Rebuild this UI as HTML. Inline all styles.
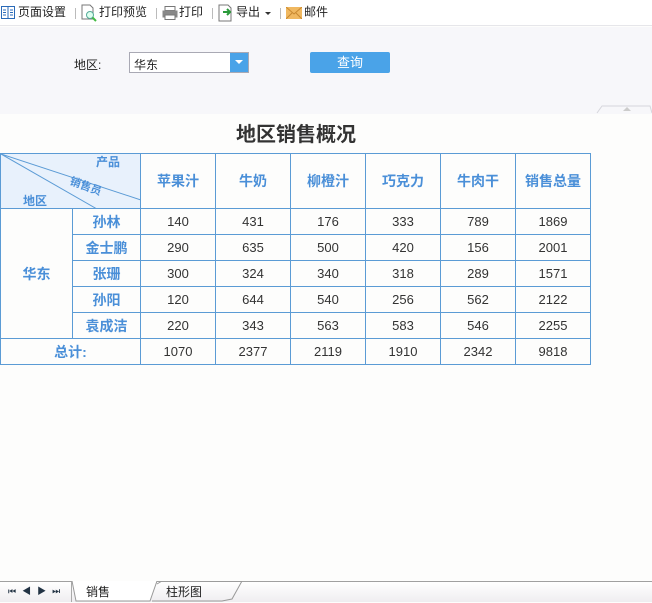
<!DOCTYPE html>
<html><head><meta charset="utf-8">
<style>
*{margin:0;padding:0;box-sizing:border-box}
body{width:652px;height:602px;background:#fdfdfc;position:relative;overflow:hidden;font-family:"Liberation Sans","Noto Sans CJK SC",sans-serif;font-size:12px;color:#222}
.tb{position:absolute;left:0;top:0;width:652px;height:26px;background:#fff;border-bottom:1px solid #e6e6ea}
.tb span{position:absolute;top:5px;font-size:12px;color:#222;line-height:14px}
.sep{position:absolute;top:8px;width:1px;height:11px;background:#bbb}
.param{position:absolute;left:0;top:27px;width:652px;height:87px;background:#f7f7fa}
.sel{position:absolute;left:129px;top:52px;width:120px;height:21px;border:1px solid #a9a9b4;background:#fff}
.btn{position:absolute;left:310px;top:52px;width:80px;height:21px;background:#4aa3e8;border-radius:2px;color:#fff;text-align:center;line-height:21px;font-size:13px}
table{position:absolute;left:0;top:153px;border-collapse:collapse}
td{border:1px solid #5b9bd5;text-align:center;font-size:13px;color:#333;height:26px;padding:0}
td.h{color:#4a8fd8;font-weight:bold;font-size:14px}
.title{position:absolute;left:0;width:592px;top:118px;text-align:center;font-size:20px;font-weight:bold;color:#333}
.bot{position:absolute;left:0;top:581px;width:652px;height:21px;border-top:1px solid #a0a0a0;background:linear-gradient(#fff,#efedf0)}
</style></head><body>
<div class="tb">
<svg style="position:absolute;left:1px;top:6px" width="14" height="13"><rect x="0.5" y="0.5" width="13" height="12" fill="#fff" stroke="#2a6ab8"/><line x1="7" y1="1" x2="7" y2="12" stroke="#2a6ab8"/><path d="M2 4h3M2 6.5h3M2 9h3M9 4h3M9 6.5h3M9 9h3" stroke="#2a6ab8"/></svg>
<span style="left:18px">页面设置</span>
<div class="sep" style="left:75px"></div>
<svg style="position:absolute;left:81px;top:4px" width="16" height="18"><path d="M1 1h8l3 3v11H1z" fill="#fff" stroke="#777"/><circle cx="9" cy="11" r="3.5" fill="#dfe" stroke="#5a9"/><line x1="11.5" y1="13.5" x2="15" y2="17" stroke="#4b4" stroke-width="2"/></svg>
<span style="left:99px">打印预览</span>
<div class="sep" style="left:156px"></div>
<svg style="position:absolute;left:162px;top:6px" width="16" height="14"><rect x="3" y="0.5" width="10" height="4" fill="#fff" stroke="#777"/><rect x="0.5" y="4.5" width="15" height="7" fill="#888"/><rect x="3" y="9" width="10" height="4.5" fill="#fff" stroke="#777"/></svg>
<span style="left:179px">打印</span>
<div class="sep" style="left:212px"></div>
<svg style="position:absolute;left:218px;top:4px" width="16" height="18"><path d="M1 1h9l3 3v13H1z" fill="#fff" stroke="#777"/><path d="M5 8h7M9 5l3 3-3 3" stroke="#2a9a3a" stroke-width="2" fill="none"/></svg>
<span style="left:236px">导出</span>
<svg style="position:absolute;left:265px;top:12px" width="6" height="4"><path d="M0 0h6L3 3z" fill="#333"/></svg>
<div class="sep" style="left:280px"></div>
<svg style="position:absolute;left:286px;top:7px" width="16" height="12"><rect width="16" height="12" fill="#f0b860"/><path d="M0 0l8 7 8-7M0 12l6-6M16 12l-6-6" stroke="#c88830" fill="none"/></svg>
<span style="left:304px">邮件</span>
</div>
<div class="param">
<svg style="position:absolute;left:590px;top:78px" width="62" height="9"><path d="M7 8 L12 1 H60 L62 8" fill="none" stroke="#d6d6dc"/><path d="M37 2l4 4h-8z" fill="#ccc"/></svg>
</div>
<span style="position:absolute;left:74px;top:56px;font-size:12px">地区:</span>
<div class="sel"><span style="position:absolute;left:4px;top:3px;font-size:12px">华东</span><div style="position:absolute;right:0;top:0;width:18px;height:19px;background:#4aa3e8"><svg style="position:absolute;left:5px;top:7px" width="8" height="5"><path d="M0 0h8L4 4z" fill="#fff"/></svg></div></div>
<div class="btn">查询</div>
<div class="title">地区销售概况</div>
<table>
<tr><td colspan="2" style="width:140px;height:55px;background:#e8f1fc;position:relative;padding:0">
<svg style="position:absolute;left:0;top:0" width="140" height="55"><line x1="0" y1="0" x2="140" y2="46" stroke="#5b9bd5"/><line x1="0" y1="0" x2="96" y2="55" stroke="#5b9bd5"/>
<text x="95" y="12" font-size="12" font-weight="bold" fill="#4a8fd8" font-family="Noto Sans CJK SC">产品</text>
<text x="68" y="30" font-size="11" font-weight="bold" fill="#4a8fd8" font-family="Noto Sans CJK SC" transform="rotate(20 68 30)">销售员</text>
<text x="22" y="51" font-size="12" font-weight="bold" fill="#4a8fd8" font-family="Noto Sans CJK SC">地区</text></svg></td>
<td class="h" style="width:75px">苹果汁</td><td class="h" style="width:75px">牛奶</td><td class="h" style="width:75px">柳橙汁</td><td class="h" style="width:75px">巧克力</td><td class="h" style="width:75px">牛肉干</td><td class="h" style="width:75px">销售总量</td></tr>
<tr><td class="h" rowspan="5" style="width:72px">华东</td><td class="h" style="width:68px">孙林</td><td>140</td><td>431</td><td>176</td><td>333</td><td>789</td><td>1869</td></tr>
<tr><td class="h">金士鹏</td><td>290</td><td>635</td><td>500</td><td>420</td><td>156</td><td>2001</td></tr>
<tr><td class="h">张珊</td><td>300</td><td>324</td><td>340</td><td>318</td><td>289</td><td>1571</td></tr>
<tr><td class="h">孙阳</td><td>120</td><td>644</td><td>540</td><td>256</td><td>562</td><td>2122</td></tr>
<tr><td class="h">袁成洁</td><td>220</td><td>343</td><td>563</td><td>583</td><td>546</td><td>2255</td></tr>
<tr><td class="h" colspan="2">总计:</td><td>1070</td><td>2377</td><td>2119</td><td>1910</td><td>2342</td><td>9818</td></tr>
</table>
<div class="bot">
<div style="position:absolute;left:0;top:0;width:72px;height:20px;border-right:1px solid #aaa;font-size:9px;color:#234;line-height:18px;padding-left:8px;letter-spacing:6px">⏮◀▶⏭</div>
<svg style="position:absolute;left:72px;top:-1px" width="180" height="22"><path d="M0 0 L4 20 H78 L85 0" fill="#fff" stroke="#999"/><path d="M85 3 L90 0 H170 L160 18 L150 20 H80" fill="none" stroke="#999"/></svg>
<span style="position:absolute;left:86px;top:1px;font-size:12px">销售</span>
<span style="position:absolute;left:166px;top:1px;font-size:12px">柱形图</span>
</div>
</body></html>
